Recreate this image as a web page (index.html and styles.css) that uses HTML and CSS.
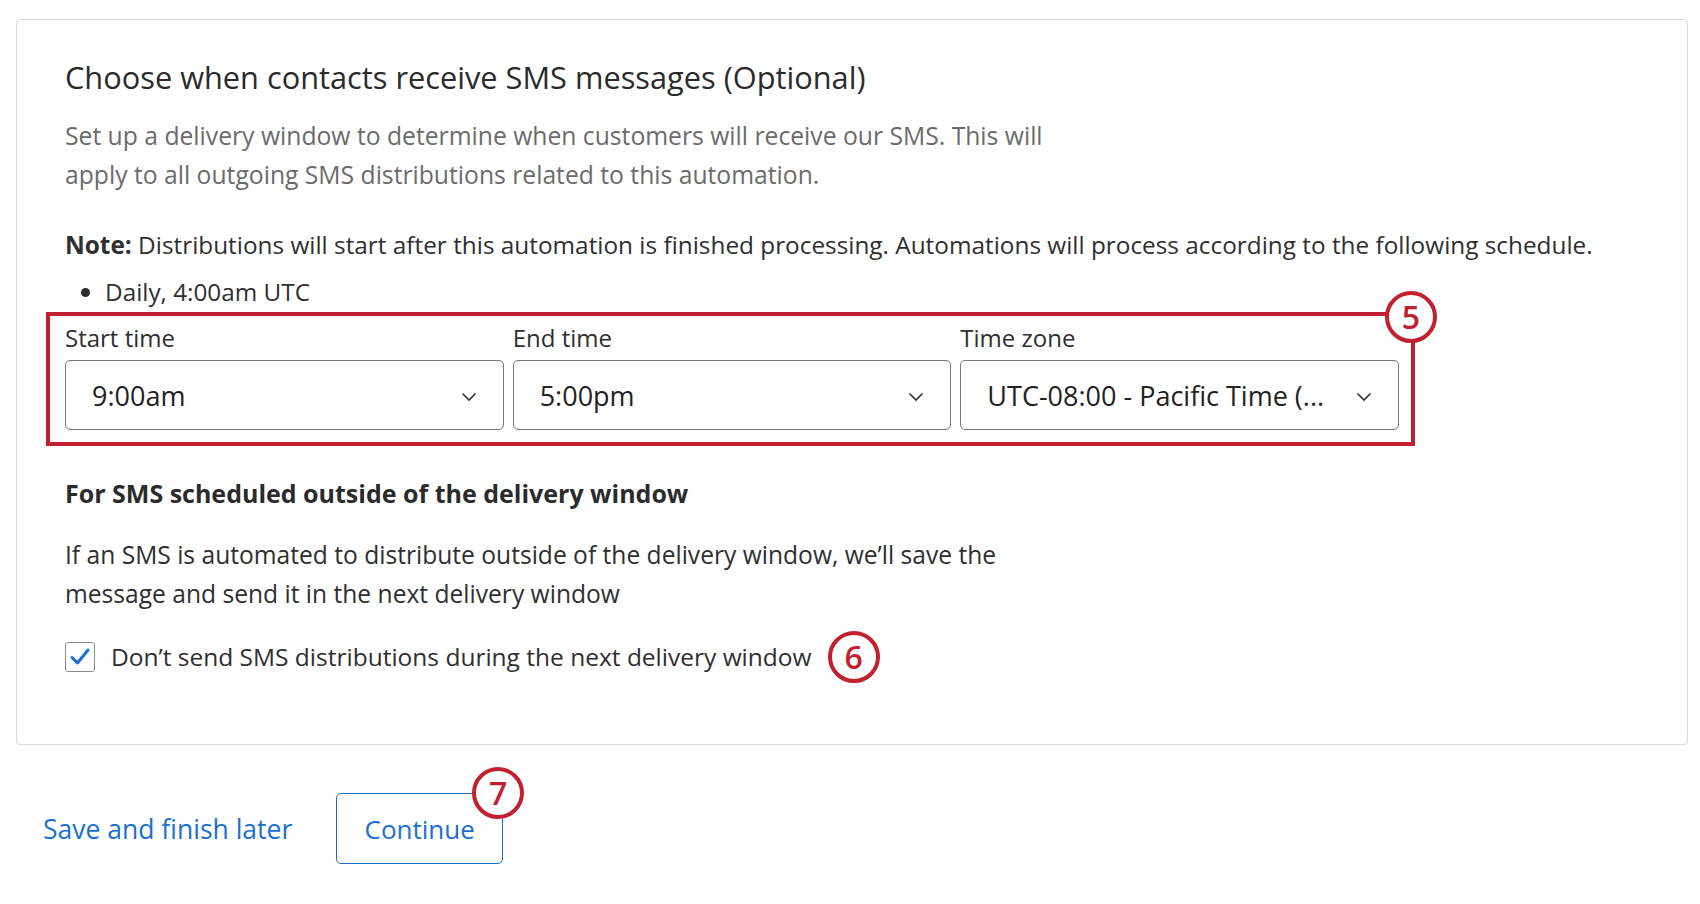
FILE: index.html
```html
<!DOCTYPE html>
<html lang="en">
<head>
    <meta charset="UTF-8">
    <title>SMS delivery window</title>
    <link rel="stylesheet" href="styles.css">
</head>
<body>
    <main class="card">
        <!-- Delivery window intro -->
        <h1 class="title">Choose when contacts receive SMS messages (Optional)</h1>
        <p class="desc">Set up a delivery window to determine when customers will receive our SMS. This will apply to all outgoing SMS distributions related to this automation.</p>

        <p class="note"><strong>Note:</strong> Distributions will start after this automation is finished processing. Automations will process according to the following schedule.</p>
        <ul class="schedule">
            <li>Daily, 4:00am UTC</li>
        </ul>

        <!-- Time pickers, highlighted -->
        <div class="highlight">
            <div class="fields">
                <div class="field">
                    <label class="field-label">Start time</label>
                    <div class="select">
                        <span>9:00am</span>
                        <svg class="chev" width="16" height="10" viewBox="0 0 16 10"><polyline points="1.5,1.5 8,8 14.5,1.5" fill="none" stroke="#333" stroke-width="1.6"/></svg>
                    </div>
                </div>
                <div class="field">
                    <label class="field-label">End time</label>
                    <div class="select">
                        <span>5:00pm</span>
                        <svg class="chev" width="16" height="10" viewBox="0 0 16 10"><polyline points="1.5,1.5 8,8 14.5,1.5" fill="none" stroke="#333" stroke-width="1.6"/></svg>
                    </div>
                </div>
                <div class="field">
                    <label class="field-label">Time zone</label>
                    <div class="select">
                        <span>UTC-08:00 - Pacific Time (...</span>
                        <svg class="chev" width="16" height="10" viewBox="0 0 16 10"><polyline points="1.5,1.5 8,8 14.5,1.5" fill="none" stroke="#333" stroke-width="1.6"/></svg>
                    </div>
                </div>
            </div>
            <span class="badge badge-5">5</span>
        </div>

        <!-- Outside window behaviour -->
        <h2 class="subhead">For SMS scheduled outside of the delivery window</h2>
        <p class="body-text">If an SMS is automated to distribute outside of the delivery window, we’ll save the message and send it in the next delivery window</p>

        <div class="check-row">
            <span class="checkbox">
                <svg width="22" height="20" viewBox="0 0 22 20"><polyline points="3,10.5 8.5,16 19,3" fill="none" stroke="#1b6fd3" stroke-width="3" stroke-linecap="round" stroke-linejoin="round"/></svg>
            </span>
            <span class="check-label">Don’t send SMS distributions during the next delivery window</span>
            <span class="badge badge-inline">6</span>
        </div>
    </main>

    <div class="actions">
        <a class="link" href="#">Save and finish later</a>
        <button class="btn">Continue<span class="badge badge-7">7</span></button>
    </div>
</body>
</html>
```

FILE: styles.css
```css
/* Page base */
body {
    margin: 0;
    font-family: 'Open Sans', 'Liberation Sans', sans-serif;
    color: #2f2f2f;
    background: #fff;
}
/* Main card */
.card {
    margin: 19px 12px 0 16px;
    padding: 38px 48px 70px 48px;
    border: 1px solid #dadada;
    border-radius: 4px;
}
.title {
    margin: 0;
    font-size: 30.75px;
    line-height: 38px;
    font-weight: 400;
    color: #2b2b2b;
}
.desc {
    margin: 20px 0 0;
    max-width: 1010px;
    font-size: 24.7px;
    line-height: 39px;
    color: #6b6b6b;
}
.note {
    margin: 31px 0 0;
    font-size: 24.35px;
    line-height: 39px;
}
.note strong {
    font-weight: 700;
}
.schedule {
    margin: 11px 0 0;
    padding-left: 40px;
    font-size: 24.3px;
    line-height: 34px;
}
/* Red annotation box around the fields */
.highlight {
    position: relative;
    margin: 3px 0 0 -19px;
    width: 1369px;
    padding: 7px 12px 12px 15px;
    border: 4.5px solid #c1202f;
    box-sizing: border-box;
}
.fields {
    display: grid;
    grid-template-columns: repeat(3, 1fr);
    gap: 9px;
}
.field-label {
    display: block;
    font-size: 24px;
    line-height: 30px;
    margin-bottom: 7px;
}
.select {
    height: 70px;
    box-sizing: border-box;
    border: 1px solid #777;
    border-radius: 5px;
    display: flex;
    align-items: center;
    justify-content: space-between;
    padding: 0 26px 0 26px;
    font-size: 27px;
    color: #222;
}
.chev {
    margin-top: 4px;
}
/* Numbered callouts */
.badge {
    width: 52px;
    height: 52px;
    box-sizing: border-box;
    border: 4.5px solid #c1202f;
    border-radius: 50%;
    background: #fff;
    color: #c1202f;
    font-size: 32px;
    font-weight: 600;
    display: flex;
    align-items: center;
    justify-content: center;
    line-height: 1;
}
.badge-5 {
    position: absolute;
    top: -25px;
    right: -26px;
}
.badge-inline {
    margin-left: 16px;
}
.badge-7 {
    position: absolute;
    top: -27px;
    right: -22px;
}
/* Outside window section */
.subhead {
    margin: 30px 0 0;
    font-size: 25px;
    line-height: 34px;
    font-weight: 700;
    color: #2b2b2b;
}
.body-text {
    margin: 25px 0 0;
    max-width: 1015px;
    font-size: 24.6px;
    line-height: 39px;
}
.check-row {
    margin-top: 27px;
    display: flex;
    align-items: center;
    height: 34px;
}
.checkbox {
    width: 30px;
    height: 30px;
    box-sizing: border-box;
    border: 1.5px solid #8a8a8a;
    border-radius: 3px;
    display: flex;
    align-items: center;
    justify-content: center;
    margin-right: 16px;
}
.check-label {
    font-size: 24.5px;
    line-height: 34px;
}
/* Bottom actions */
.actions {
    margin: 48px 0 0 43px;
    display: flex;
    align-items: center;
    gap: 44px;
}
.link {
    font-size: 26.5px;
    color: #1a6fd0;
    text-decoration: none;
}
.btn {
    position: relative;
    height: 71px;
    width: 167px;
    border: 1px solid #1a6fd0;
    border-radius: 5px;
    background: #fff;
    color: #1a6fd0;
    font-family: inherit;
    font-size: 26px;
    padding: 0;
}
```
